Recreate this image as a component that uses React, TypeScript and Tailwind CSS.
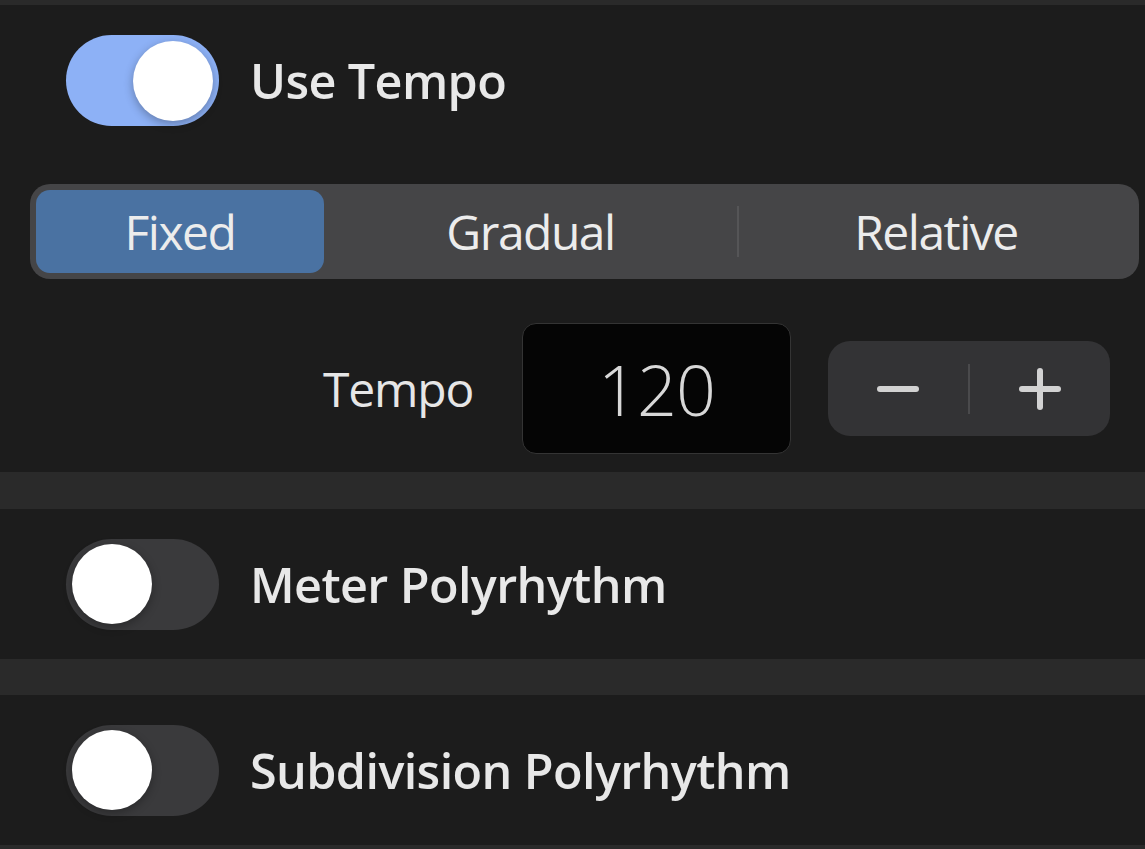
import { useState } from 'react'

type Mode = 'Fixed' | 'Gradual' | 'Relative'

const modes: { label: Mode; width: string }[] = [
  { label: 'Fixed', width: 'w-[288px]' },
  { label: 'Gradual', width: 'w-[413px]' },
  { label: 'Relative', width: 'flex-1' },
]

const Toggle = ({ on, onChange }: { on: boolean; onChange: (v: boolean) => void }) => (
  <button
    type="button"
    onClick={() => onChange(!on)}
    className={`flex h-[91px] w-[153px] shrink-0 items-center rounded-full px-[6px] ${
      on ? 'justify-end bg-[#8db1f6]' : 'justify-start bg-[#3a3a3c]'
    }`}
  >
    <span className="h-[80px] w-[80px] rounded-full bg-white shadow-[0_3px_10px_rgba(0,0,0,0.3)]" />
  </button>
)

const ToggleRow = ({ label, on, onChange }: { label: string; on: boolean; onChange: (v: boolean) => void }) => (
  <div className="flex items-center gap-[31px] pl-[66px]">
    <Toggle on={on} onChange={onChange} />
    <span className="text-[48.5px] font-semibold leading-none tracking-[-0.6px] text-[#e8e8e8]">{label}</span>
  </div>
)

export default function App() {
  const [useTempo, setUseTempo] = useState(true)
  const [meter, setMeter] = useState(false)
  const [subdivision, setSubdivision] = useState(false)
  const [mode, setMode] = useState<Mode>('Fixed')
  const [tempo, setTempo] = useState(120)

  return (
    <div className="flex h-[849px] w-[1145px] flex-col bg-[#2a2a2a] font-['Open_Sans',sans-serif]">
      <div className="h-[5px]" />

      <section className="flex h-[467px] flex-col bg-[#1c1c1c]">
        <div className="pt-[30px]">
          <ToggleRow label="Use Tempo" on={useTempo} onChange={setUseTempo} />
        </div>

        <div className="ml-[30px] mr-[6px] mt-[58px] flex h-[95px] items-stretch rounded-[20px] bg-[#454547] p-[6px]">
          {modes.map((m, i) => (
            <div key={m.label} className={`flex items-center ${m.width}`}>
              {i === 2 && <div className="h-[51px] w-[2px] bg-[#555557]" />}
              <button
                type="button"
                onClick={() => setMode(m.label)}
                className={`flex h-full flex-1 items-center justify-center rounded-[14px] text-[48px] leading-none tracking-[-1.5px] text-[#ececec] ${
                  mode === m.label ? 'bg-[#4a72a2]' : ''
                }`}
              >
                {m.label}
              </button>
            </div>
          ))}
        </div>

        <div className="mt-[44px] flex items-center">
          <span className="ml-[323px] w-[153px] text-[48px] leading-none tracking-[-1.2px] text-[#e6e6e6]">Tempo</span>
          <div className="ml-[46px] flex h-[131px] w-[269px] items-center justify-center rounded-[14px] border border-[#343434] bg-[#050505]">
            <span className="text-[70px] font-light leading-none tracking-[-1px] text-[#d8d8d8]">{tempo}</span>
          </div>
          <div className="ml-[37px] flex h-[95px] w-[282px] items-center rounded-[22px] bg-[#333335]">
            <button type="button" onClick={() => setTempo(tempo - 1)} className="flex h-full flex-1 items-center justify-center">
              <svg width="44" height="8" viewBox="0 0 44 8">
                <line x1="4" y1="4" x2="40" y2="4" stroke="#d2d2d2" strokeWidth="6" strokeLinecap="round" />
              </svg>
            </button>
            <div className="h-[50px] w-[2px] bg-[#4a4a4c]" />
            <button type="button" onClick={() => setTempo(tempo + 1)} className="flex h-full flex-1 items-center justify-center">
              <svg width="44" height="44" viewBox="0 0 44 44">
                <line x1="4" y1="22" x2="40" y2="22" stroke="#d2d2d2" strokeWidth="6" strokeLinecap="round" />
                <line x1="22" y1="4" x2="22" y2="40" stroke="#d2d2d2" strokeWidth="6" strokeLinecap="round" />
              </svg>
            </button>
          </div>
        </div>
      </section>

      <div className="h-[37px]" />

      <section className="flex h-[150px] items-center bg-[#1c1c1c]">
        <ToggleRow label="Meter Polyrhythm" on={meter} onChange={setMeter} />
      </section>

      <div className="h-[36px]" />

      <section className="flex h-[150px] items-center bg-[#1c1c1c]">
        <ToggleRow label="Subdivision Polyrhythm" on={subdivision} onChange={setSubdivision} />
      </section>

      <div className="h-[4px]" />
    </div>
  )
}
